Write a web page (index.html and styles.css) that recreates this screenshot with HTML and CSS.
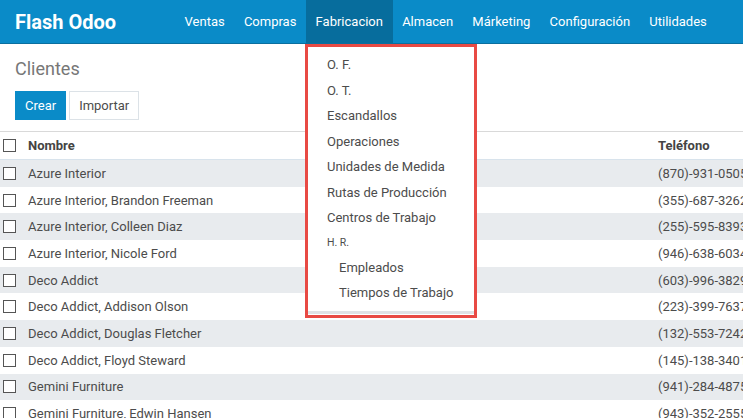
FILE: index.html
```html
<!DOCTYPE html>
<html lang="es">

<head>
    <meta charset="utf-8">
    <meta name="viewport" content="width=device-width, initial-scale=1.0">
    <title>Clientes - Flash Odoo</title>
    <link rel="stylesheet" href="styles.css">
</head>

<body>

    <header id="topbar">
        <a class="marca" href="#">Flash Odoo</a>
        <nav id="menu">
            <a href="#">Ventas</a>
            <a href="#">Compras</a>
            <a href="#" class="activo">Fabricacion</a>
            <a href="#">Almacen</a>
            <a href="#">Márketing</a>
            <a href="#">Configuración</a>
            <a href="#">Utilidades</a>
        </nav>

        <div id="desplegable">
            <ul>
                <li><a href="#">O. F.</a></li>
                <li><a href="#">O. T.</a></li>
                <li><a href="#">Escandallos</a></li>
                <li><a href="#">Operaciones</a></li>
                <li><a href="#">Unidades de Medida</a></li>
                <li><a href="#">Rutas de Producción</a></li>
                <li><a href="#">Centros de Trabajo</a></li>
                <li class="titulo">H. R.</li>
                <li class="sub"><a href="#">Empleados</a></li>
                <li class="sub"><a href="#">Tiempos de Trabajo</a></li>
            </ul>
        </div>
    </header>

    <section id="panel">
        <h1>Clientes</h1>
        <div class="botones">
            <button class="crear">Crear</button>
            <button class="importar">Importar</button>
        </div>
    </section>

    <main>
        <table id="lista">
            <thead>
                <tr>
                    <th class="chk"><span class="caja"></span></th>
                    <th class="nombre">Nombre</th>
                    <th class="tel">Teléfono</th>
                </tr>
            </thead>
            <tbody>
                <tr><td class="chk"><span class="caja"></span></td><td>Azure Interior</td><td>(870)-931-0505</td></tr>
                <tr><td class="chk"><span class="caja"></span></td><td>Azure Interior, Brandon Freeman</td><td>(355)-687-3262</td></tr>
                <tr><td class="chk"><span class="caja"></span></td><td>Azure Interior, Colleen Diaz</td><td>(255)-595-8393</td></tr>
                <tr><td class="chk"><span class="caja"></span></td><td>Azure Interior, Nicole Ford</td><td>(946)-638-6034</td></tr>
                <tr><td class="chk"><span class="caja"></span></td><td>Deco Addict</td><td>(603)-996-3829</td></tr>
                <tr><td class="chk"><span class="caja"></span></td><td>Deco Addict, Addison Olson</td><td>(223)-399-7637</td></tr>
                <tr><td class="chk"><span class="caja"></span></td><td>Deco Addict, Douglas Fletcher</td><td>(132)-553-7242</td></tr>
                <tr><td class="chk"><span class="caja"></span></td><td>Deco Addict, Floyd Steward</td><td>(145)-138-3401</td></tr>
                <tr><td class="chk"><span class="caja"></span></td><td>Gemini Furniture</td><td>(941)-284-4875</td></tr>
                <tr><td class="chk"><span class="caja"></span></td><td>Gemini Furniture, Edwin Hansen</td><td>(943)-352-2555</td></tr>
            </tbody>
        </table>
    </main>

</body>

</html>
```

FILE: styles.css
```css
body {
    margin: 0;
    padding: 0;
    font-family: Roboto, "Liberation Sans", sans-serif;
    font-size: 13px;
    color: #4c4c4c;
    background-color: white;
    overflow: hidden;
}

a {
    text-decoration: none;
    color: inherit;
}

#topbar {
    position: relative;
    display: flex;
    align-items: stretch;
    height: 44px;
    background-color: #0a8bc8;
    border-bottom: 1px solid #0a6f9f;
    box-sizing: border-box;
}

.marca {
    color: white;
    font-size: 20px;
    font-weight: bold;
    line-height: 45px;
    padding-left: 15px;
    width: 160px;
}

#menu {
    display: flex;
}

#menu a {
    color: white;
    line-height: 44px;
    padding: 0 9.6px;
}

#menu a.activo {
    background-color: #076d9d;
}

#desplegable {
    position: absolute;
    top: 44px;
    left: 305px;
    width: 166px;
    border: 3px solid #e84a44;
    background-color: white;
    z-index: 5;
}

#desplegable ul {
    list-style: none;
    margin: 0;
    padding: 5px 0 5px;
    border-bottom: 3px solid #dfe2e6;
    margin-bottom: 1px;
}

#desplegable li {
    height: 25.5px;
    line-height: 25.5px;
    padding-left: 19px;
    color: #4c4c4c;
}

#desplegable li.titulo {
    font-size: 10.5px;
    height: 24px;
    line-height: 24px;
}

#desplegable li.sub {
    padding-left: 31px;
}

#panel {
    padding: 14px 15px 11px;
    border-bottom: 1px solid #d9d9d9;
}

#panel h1 {
    margin: 0 0 11px;
    font-size: 18px;
    font-weight: normal;
    color: #777;
    line-height: 22px;
}

.botones {
    display: flex;
    gap: 3px;
}

.botones button {
    font-family: Roboto, "Liberation Sans", sans-serif;
    font-size: 13px;
    height: 29px;
    padding: 0 9px;
    border: 1px solid #dce2e7;
    background: white;
    color: #4c4c4c;
}

.botones .crear {
    background-color: #0a8bc8;
    border-color: #0a8bc8;
    color: white;
}

#lista {
    border-collapse: collapse;
    width: 800px;
    table-layout: fixed;
}

#lista th,
#lista td {
    text-align: left;
    padding: 0;
    height: 26.7px;
    white-space: nowrap;
}

#lista th {
    height: 27px;
    font-weight: bold;
    color: #444;
    border-bottom: 1px solid #d8e3ec;
}

#lista .chk {
    width: 25px;
    padding-left: 3px;
}

#lista .nombre {
    width: 630px;
}

.caja {
    display: block;
    width: 11px;
    height: 11px;
    border: 1px solid #555;
    background: white;
}

#lista tbody tr:nth-child(odd) {
    background-color: #e8ebee;
}
```
